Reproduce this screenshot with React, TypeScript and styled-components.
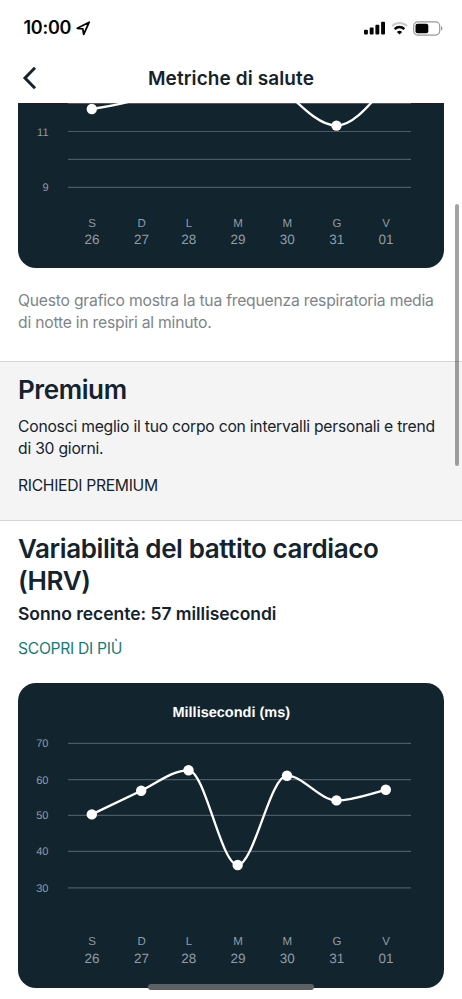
import React from 'react';
import styled, { createGlobalStyle } from 'styled-components';

const NAVY = '#12252f';
const INK = '#14232d';
const CARD_WIDTH = 426;
const X_POINTS = [73.8, 123.2, 170.5, 219.7, 269, 318.5, 367.8];
const DAYS = [
  ['S', '26'],
  ['D', '27'],
  ['L', '28'],
  ['M', '29'],
  ['M', '30'],
  ['G', '31'],
  ['V', '01'],
];

const GlobalStyle = createGlobalStyle`
  * { box-sizing: border-box; }
  body { margin: 0; background: #fff; overflow: hidden; }
`;

const Screen = styled.main`
  position: relative;
  display: flex;
  flex-direction: column;
  width: 462px;
  height: 999px;
  overflow: hidden;
  background: #fff;
  color: ${INK};
  font-family: Inter, 'Liberation Sans', sans-serif;
`;

const StatusBar = styled.div`
  display: flex;
  align-items: center;
  flex: none;
  height: 55px;
  padding: 1px 19px 0 23.5px;
  color: #050505;
`;

const Clock = styled.time`
  font-size: 18px;
  font-weight: 600;
  line-height: 22px;
  letter-spacing: -0.25px;
`;

const LocationIcon = styled.svg`
  margin-left: 5px;
`;

const StatusIcons = styled.div`
  display: flex;
  align-items: center;
  gap: 5.5px;
  margin-left: auto;
`;

const NavBar = styled.header`
  display: grid;
  grid-template-columns: 60px 1fr 60px;
  align-items: center;
  flex: none;
  height: 48px;
  padding-bottom: 2px;
`;

const BackButton = styled.button`
  display: flex;
  padding: 0 0 0 22px;
  border: 0;
  background: none;
`;

const NavTitle = styled.h1`
  margin: 1px 0 0;
  text-align: center;
  font-size: 19px;
  font-weight: 600;
  line-height: 24px;
  letter-spacing: 0.1px;
`;

const Card = styled.div<{ $clipped?: boolean; $height: number }>`
  flex: none;
  width: ${CARD_WIDTH}px;
  height: ${(p) => p.$height}px;
  margin: 0 18px;
  overflow: hidden;
  border-radius: ${(p) => (p.$clipped ? '0 0 18px 18px' : '18px')};
  background: ${NAVY};
`;

const Chart = styled.svg`
  display: block;
  font-family: 'Liberation Sans', Arial, sans-serif;
  text-rendering: geometricPrecision;
`;

const GridLine = styled.line`
  stroke: #4b5a63;
  stroke-width: 1.2;
`;

const Curve = styled.path`
  fill: none;
  stroke: #fff;
  stroke-width: 2.3;
`;

const AxisLabel = styled.text<{ $size: number }>`
  fill: #909ca5;
  font-size: ${(p) => p.$size}px;
`;

const ChartTitle = styled.text`
  fill: #fff;
  font-size: 14.5px;
  font-weight: 700;
`;

const Caption = styled.p`
  flex: none;
  height: 93px;
  margin: 0;
  padding: 21.5px 18px 0;
  color: #7e848a;
  font-size: 15.7px;
  line-height: 22.5px;
  letter-spacing: -0.22px;
  white-space: nowrap;
`;

const PremiumPanel = styled.section`
  flex: none;
  height: 160px;
  padding: 12px 18px 0;
  border-top: 1px solid #d3d4d5;
  border-bottom: 1px solid #d3d4d5;
  background: #f4f4f4;
`;

const Heading = styled.h2`
  margin: 0;
  font-size: 26px;
  font-weight: 600;
  line-height: 32px;
  letter-spacing: -0.4px;
  white-space: nowrap;
`;

const Body = styled.p`
  margin: 9.5px 0 0;
  font-size: 15.7px;
  line-height: 22.5px;
  letter-spacing: -0.23px;
  white-space: nowrap;
`;

const TextLink = styled.a<{ $accent?: boolean }>`
  display: block;
  margin-top: ${(p) => (p.$accent ? 13 : 14.5)}px;
  color: ${(p) => (p.$accent ? '#187b78' : INK)};
  font-size: 15.7px;
  line-height: 22px;
  letter-spacing: -0.31px;
  white-space: nowrap;
`;

const HrvIntro = styled.section`
  flex: none;
  height: 162px;
  padding: 12px 18px 0;
`;

const Recent = styled.p`
  margin: 6px 0 0;
  font-size: 17.5px;
  font-weight: 600;
  line-height: 22px;
  letter-spacing: -0.04px;
  white-space: nowrap;
`;

const ScrollThumb = styled.div`
  position: absolute;
  top: 204px;
  right: 3px;
  width: 4px;
  height: 262px;
  border-radius: 2px;
  background: rgba(0, 0, 0, 0.36);
`;

const HomeIndicator = styled.div`
  position: absolute;
  left: 148px;
  bottom: 9px;
  width: 166px;
  height: 6px;
  border-radius: 3px;
  background: #5e6163;
`;

type HealthChartProps = {
  height: number;
  title?: string;
  lines: { y: number; label?: string }[];
  values: number[];
  curve: string;
  daysY: number;
};

function HealthChart({ height, title, lines, values, curve, daysY }: HealthChartProps) {
  return (
    <Chart width={CARD_WIDTH} height={height} viewBox={`0 0 ${CARD_WIDTH} ${height}`}>
      {title && (
        <ChartTitle x={213.3} y={34} textAnchor="middle">
          {title}
        </ChartTitle>
      )}
      {lines.map(({ y, label }) => (
        <g key={y}>
          <GridLine x1={50} x2={393} y1={y} y2={y} />
          {label && (
            <AxisLabel $size={11} x={30.5} y={y + 4} textAnchor="end">
              {label}
            </AxisLabel>
          )}
        </g>
      ))}
      <Curve d={curve} />
      {values.map((y, i) => (
        <circle key={i} cx={X_POINTS[i]} cy={y} r={5.2} fill="#fff" />
      ))}
      {DAYS.map(([day, date], i) => (
        <g key={date}>
          <AxisLabel $size={11.5} x={X_POINTS[i] + 0.4} y={daysY} textAnchor="middle">
            {day}
          </AxisLabel>
          <AxisLabel $size={13.5} x={X_POINTS[i] + 0.2} y={daysY + 17.7} textAnchor="middle">
            {date}
          </AxisLabel>
        </g>
      ))}
    </Chart>
  );
}

export default function App() {
  return (
    <>
      <GlobalStyle />
      <Screen>
        <StatusBar>
          <Clock>10:00</Clock>
          <LocationIcon width="15" height="15" viewBox="0 0 15 15">
            <path
              d="M13.2 1.2 1.3 7.3 6.8 7.9 7.7 13.3Z"
              fill="none"
              stroke="currentColor"
              strokeWidth="1.8"
              strokeLinejoin="round"
            />
          </LocationIcon>
          <StatusIcons>
            <svg width="21" height="14" viewBox="0 0 21 14" fill="currentColor">
              <rect x="0" y="8.8" width="3.9" height="4.7" rx="1" />
              <rect x="5.7" y="6.6" width="3.9" height="6.9" rx="1" />
              <rect x="11.4" y="3.8" width="3.9" height="9.7" rx="1" />
              <rect x="17.1" y="0.8" width="3.9" height="12.7" rx="1" />
            </svg>
            <svg width="17" height="14" viewBox="0 0 17 14" fill="none" strokeWidth="2">
              <path d="M1 5.1C5.2.9 11.8.9 16 5.1" stroke="#c9c9c9" />
              <path d="M3.7 8.1C6.4 5.4 10.6 5.4 13.3 8.1" stroke="currentColor" strokeWidth="2.5" />
              <path d="M8.5 13.5 5.9 10.9C7.4 9.5 9.6 9.5 11.1 10.9Z" fill="currentColor" />
            </svg>
            <svg width="30" height="15" viewBox="0 0 30 15">
              <rect x="0.7" y="0.9" width="26" height="13.2" rx="4" fill="none" stroke="#999" strokeWidth="1.2" />
              <rect x="2.5" y="2.8" width="12.8" height="9.4" rx="2" fill="currentColor" />
              <path d="M28 5.3c1.9.6 1.9 3.8 0 4.4Z" fill="#999" />
            </svg>
          </StatusIcons>
        </StatusBar>
        <NavBar>
          <BackButton aria-label="Indietro">
            <svg width="16" height="24" viewBox="0 0 16 24">
              <path d="M13 1.8 3 12 13 22.2" fill="none" stroke={INK} strokeWidth="3" />
            </svg>
          </BackButton>
          <NavTitle>Metriche di salute</NavTitle>
        </NavBar>
        <Card $clipped $height={165}>
          <HealthChart
            height={165}
            lines={[{ y: 0.3 }, { y: 28.5, label: '11' }, { y: 56.4 }, { y: 84.3, label: '9' }]}
            values={[6, -8, -12, -12, -6, 22.6, -20]}
            curve="M73.8 6C90 3.5 107 1 123.2 -5M269 -10C285 5 302 22.6 318.5 22.6C332 22.6 347 9 367.8 -18"
            daysY={123.5}
          />
        </Card>
        <Caption>
          Questo grafico mostra la tua frequenza respiratoria media
          <br />
          di notte in respiri al minuto.
        </Caption>
        <PremiumPanel>
          <Heading>Premium</Heading>
          <Body>
            Conosci meglio il tuo corpo con intervalli personali e trend
            <br />
            di 30 giorni.
          </Body>
          <TextLink>RICHIEDI PREMIUM</TextLink>
        </PremiumPanel>
        <HrvIntro>
          <Heading>
            Variabilità del battito cardiaco
            <br />
            (HRV)
          </Heading>
          <Recent>Sonno recente: 57 millisecondi</Recent>
          <TextLink $accent>SCOPRI DI PIÙ</TextLink>
        </HrvIntro>
        <Card $height={305}>
          <HealthChart
            height={305}
            title="Millisecondi (ms)"
            lines={[
              { y: 60.3, label: '70' },
              { y: 96.7, label: '60' },
              { y: 132.4, label: '50' },
              { y: 168.4, label: '40' },
              { y: 204.9, label: '30' },
            ]}
            values={[131.4, 107.7, 87.3, 182, 92.7, 117.4, 106.8]}
            curve="M73.8 131.4L123.2 107.7C139 100 154 87.3 170.5 87.3C187 87.3 203 182 219.7 182C236 182 252 92.7 269 92.7C285 92.7 302 117.4 318.5 117.4C335 117.4 351 111 367.8 106.8"
            daysY={262}
          />
        </Card>
        <ScrollThumb />
        <HomeIndicator />
      </Screen>
    </>
  );
}
